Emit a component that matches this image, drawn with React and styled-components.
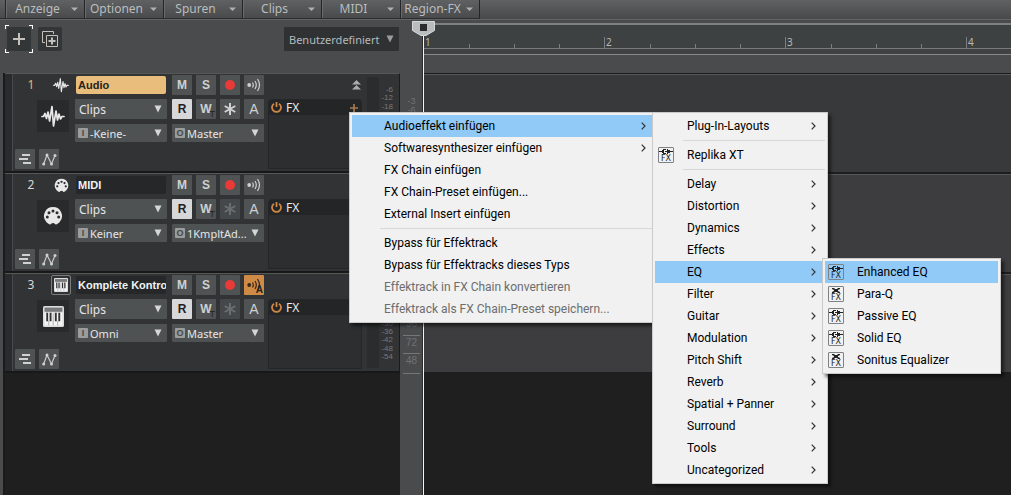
import React from "react";
import styled, { createGlobalStyle, css } from "styled-components";

const ui = `"Noto Sans", "Open Sans", sans-serif`;
const arial = `"Liberation Sans", Arial, sans-serif`;

const GlobalStyle = createGlobalStyle`
  *, *::before, *::after { box-sizing: border-box; }
  body { margin: 0; background: #1f1f1f; font-family: ${ui}; font-size: 12px; }
  button, input, select { margin: 0; padding: 0; border: 0; font: inherit; color: inherit; background: none; outline: none; }
  svg { display: block; flex: none; }
`;

const App_ = styled.div`
  position: relative;
  display: flex;
  flex-direction: column;
  min-height: 100vh;
  overflow: hidden;
`;

/* ---------- menu bar ---------- */
const MenuBar = styled.nav`
  display: flex;
  height: 20px;
  background: linear-gradient(#606163, #48494b);
  border-bottom: 1px solid #636462;
`;
const BarStub = styled.div`
  width: 6px;
  border-right: 1px solid #242526;
  border-bottom: 1px solid #2c2d2e;
`;
const BarButton = styled.button`
  display: flex;
  align-items: center;
  width: 79px;
  padding: 0 6px 0 1px;
  border-right: 1px solid #242526;
  border-bottom: 1px solid #2c2d2e;
  box-shadow: inset 1px 0 #6a6b6c;
  color: #b9bdbe;
  font-size: 12px;
  line-height: 16px;
`;
const BarLabel = styled.span`
  flex: 1;
  margin-right: 3px;
  text-align: center;
  white-space: nowrap;
`;

/* ---------- workspace ---------- */
const Workspace = styled.main`
  flex: 1;
  display: flex;
  background: #4a4b4d;
`;
const TrackPane = styled.section`
  display: flex;
  flex-direction: column;
  width: 400px;
  flex: none;
`;
const Tools = styled.div`
  display: flex;
  align-items: center;
  gap: 5px;
  height: 53px;
  padding: 0 1px 15px 5px;
`;
const AddFrame = styled.div`
  padding: 2px;
  background:
    linear-gradient(#fff, #fff) 0 0 / 4px 1px, linear-gradient(#fff, #fff) 0 0 / 1px 4px,
    linear-gradient(#fff, #fff) 100% 0 / 4px 1px, linear-gradient(#fff, #fff) 100% 0 / 1px 4px,
    linear-gradient(#fff, #fff) 0 100% / 4px 1px, linear-gradient(#fff, #fff) 0 100% / 1px 4px,
    linear-gradient(#fff, #fff) 100% 100% / 4px 1px, linear-gradient(#fff, #fff) 100% 100% / 1px 4px;
  background-repeat: no-repeat;
`;
const ToolButton = styled.button`
  display: grid;
  place-items: center;
  width: 24px;
  height: 24px;
  border-radius: 2px;
  background: #323637;
  color: #c5c0b9;
`;

const Picker = styled.div`
  position: relative;
  display: flex;
  align-items: center;
  height: ${(p) => p.$h}px;
  border-radius: 1px;
  background: ${(p) => p.$bg || "#4e5253"};
  color: ${(p) => p.$fg || "#e6e6e6"};
  margin-left: ${(p) => (p.$push ? "auto" : 0)};
  width: ${(p) => (p.$push ? "115px" : "auto")};
  select {
    appearance: none;
    width: 100%;
    height: 100%;
    padding-top: 1px;
    padding-left: ${(p) => (p.$badge ? 15 : p.$push ? 5 : 4)}px;
    font-size: ${(p) => (p.$badge || p.$push ? 11 : 12)}px;
    line-height: 16px;
  }
  option { color: #000; }
`;
const PickerArrow = styled.svg`
  position: absolute;
  right: 5px;
  pointer-events: none;
`;
const PortBadge = styled.span`
  position: absolute;
  left: 3px;
  display: grid;
  place-items: center;
  width: 10px;
  height: 10px;
  border-radius: 1px;
  background: #9b9c9c;
  color: #45484a;
  font: bold 9px/10px ${arial};
  pointer-events: none;
`;

/* ---------- tracks ---------- */
const TrackList = styled.div`
  flex: 1;
  margin-left: 3px;
  border-left: 2px solid #1b1b1c;
  background: #1f1f1f;
`;
const Track = styled.article`
  display: flex;
  padding-right: 2px;
  background: #323335;
  border-top: 1px solid #565855;
  border-bottom: 2px solid #181818;
  border-right: 1px solid #1b1b1b;
`;
const Grip = styled.div`
  width: 8px;
  background: #2a2b2e;
  border-right: 1px solid #48494b;
`;
const Col = styled.div`
  display: flex;
  flex-direction: column;
  width: ${(p) => p.$w}px;
  margin-right: ${(p) => p.$mr || 0}px;
  padding: 1px 0 2px;
`;
const Head = styled.div`
  display: flex;
  align-items: center;
  justify-content: flex-end;
  height: 20px;
  padding-right: 4px;
`;
const Num = styled.span`
  width: 16px;
  margin-right: 12px;
  text-align: center;
  color: ${(p) => (p.$active ? "#eab26a" : "#d8d8d8")};
  font-size: 12px;
  line-height: 16px;
`;
const SmallIcon = styled.span`
  display: grid;
  place-items: center;
  width: 20px;
  height: 20px;
  border-radius: 2px;
  border: 1px solid ${(p) => (p.$framed ? "#7b7c7d" : "transparent")};
`;
const BigIcon = styled.div`
  display: grid;
  place-items: center;
  width: 32px;
  height: 32px;
  margin: 5px 6px 17px auto;
  background: #292a2b;
`;
const Row = styled.div`
  display: flex;
  gap: 4px;
  padding-left: ${(p) => p.$pl || 0}px;
  margin-bottom: ${(p) => p.$mb || 0}px;
`;
const Name = styled.input`
  width: 90px;
  height: 18px;
  margin: 1px 1px 5px;
  padding: 0 0 0 2px;
  border-radius: 2px;
  background: ${(p) => (p.$active ? "#e9bd7c" : "#262728")};
  color: ${(p) => (p.$active ? "#26221c" : "#eef4f6")};
  font: bold 11px/18px ${arial};
`;
const Btn = styled.button`
  position: relative;
  display: grid;
  place-items: center;
  width: 20px;
  height: 20px;
  border-radius: 1px;
  background: #505354;
  color: #cfd0d0;
  font: bold 12px/20px ${arial};
  ${(p) => p.$letter === "tall" && css`font: 14px/20px ${arial};`}
  ${(p) => p.$on === "light" && css`background: #d6d7d9; color: #1f2022;`}
  ${(p) => p.$on === "orange" && css`background: #cf8b45; color: #33261a;`}
  ${(p) => p.$dim && css`background: #45484a; color: #6b6e70;`}
`;
const Sub = styled.small`
  position: absolute;
  right: 1px;
  bottom: 0;
  color: #222;
  font: ${(p) => (p.$bold ? "bold 10px/10px" : "9px/10px")} ${arial};
`;
const Stack = styled.div`
  display: flex;
  flex-direction: column;
  gap: ${(p) => p.$gap}px;
`;
const Expand = styled.div`
  display: flex;
  justify-content: flex-end;
  align-items: center;
  height: 20px;
  padding-right: 1px;
  margin-bottom: 4px;
`;
const FxBox = styled.div`
  flex: 1;
  border: 1px solid #252627;
  border-radius: 4px 4px 0 0;
  background: #2d2e30;
`;
const FxHead = styled.div`
  display: flex;
  align-items: center;
  gap: 4px;
  height: 15px;
  padding: 0 3px 0 2px;
  border-radius: 3px 3px 0 0;
  background: #242526;
  color: #e8eaec;
  font-size: 12px;
  line-height: 15px;
  svg:last-child { margin-left: auto; }
`;
const MeterBar = styled.div`
  width: 12px;
  margin: 3px 1px;
  border-radius: 2px;
  background: #2b2c2d;
`;
const MeterScale = styled.div`
  flex: 1;
  display: flex;
  flex-direction: column;
  justify-content: space-between;
  padding: 12px 4px 10px 0;
  text-align: right;
  color: #77797b;
  font: 8px/8px ${arial};
`;

/* ---------- vertical scale ---------- */
const ScalePane = styled.aside`
  flex: none;
  width: 23px;
  padding: 77px 2px 0 3px;
  border-right: 1px solid #2b2b2c;
`;
const ScalePart = styled.div`
  height: 100px;
  display: flex;
  flex-direction: column;
  text-align: center;
  color: #707274;
  font: 9px/9px ${arial};
`;
const Key = styled.div`
  height: ${(p) => p.$h}px;
  border-bottom: 1px solid #747678;
  font-size: 10px;
  line-height: 14px;
`;

/* ---------- timeline ---------- */
const Timeline = styled.section`
  position: relative;
  flex: 1;
  min-width: 0;
  display: flex;
  flex-direction: column;
  background: #1f1f1f;
`;
const RulerArea = styled.div`
  height: 54px;
  padding-top: 3px;
  background: #4a4b4d;
  border-bottom: 1px solid #1c1c1d;
`;
const Ruler = styled.div`
  display: flex;
  align-items: flex-end;
  height: 26px;
  overflow: hidden;
  background: #3e4141;
  border-top: 2px solid #7e8081;
  border-bottom: 1px solid #77797a;
`;
const RulerFoot = styled.div`
  height: 6px;
  background: #3f4142;
  border-bottom: 1px solid #87898a;
`;
const Bar = styled.div`
  flex: none;
  display: grid;
  grid-template-columns: 46px 45px 45px 45px;
  align-items: end;
  width: 181px;
  color: #b4b9bb;
  font: 10px/11px ${ui};
`;
const Beat = styled.span`
  height: ${(p) => (p.$major ? 11 : 4)}px;
  padding-left: 1px;
  border-left: 1px solid #7b7d7e;
`;
const Lane = styled.div`
  height: 100px;
  background: ${(p) => p.$bg};
  border-top: 1px solid #565857;
  border-bottom: 2px solid #1e1e1f;
`;
const Playhead = styled.div`
  position: absolute;
  top: 1px;
  bottom: 0;
  left: -11px;
  width: 23px;
  display: flex;
  flex-direction: column;
  align-items: center;
`;
const PlayLine = styled.div`
  flex: 1;
  width: 1px;
  background: #f4f4f4;
`;

/* ---------- context menus ---------- */
const Menu = styled.div`
  position: absolute;
  left: ${(p) => p.$x}px;
  top: ${(p) => p.$y}px;
  width: ${(p) => p.$w}px;
  padding: 2px;
  border: 1px solid #c9cac9;
  background: #f1f1f1;
  color: #000;
  box-shadow: 3px 3px 3px rgba(0, 0, 0, 0.5);
`;
const Item = styled.button`
  display: flex;
  align-items: center;
  width: 100%;
  height: 22px;
  padding-right: 9px;
  background: ${(p) => (p.$on ? "#91c9f7" : "transparent")};
  color: ${(p) => (p.disabled ? "#6d6d6d" : "#000")};
  text-align: left;
  white-space: nowrap;
  font: 12px/22px Roboto, "Open Sans", sans-serif;
  > svg { margin-left: auto; }
`;
const ItemIcon = styled.span`
  width: 32px;
  padding-left: 3px;
`;
const Rule = styled.hr`
  height: 1px;
  margin: 3px 0 3px 28px;
  border: 0;
  background: #d7d7d7;
`;

/* ---------- drawings ---------- */
const BarArrow = () => (
  <svg width="7" height="4" viewBox="0 0 7 4"><path d="M0 0.5h7L3.5 4z" fill="#aeb2b3" /></svg>
);
const Arrow = ({ color }) => (
  <PickerArrow width="8" height="8" viewBox="0 0 8 8"><path d="M0.5 0.5h7L4 7.5z" fill={color} /></PickerArrow>
);
const Wave = ({ s }) => (
  <svg width={s} height={s} viewBox="0 0 24 24" fill="none" stroke="#e8e8e8" strokeWidth="1.7" strokeLinejoin="round" strokeLinecap="round">
    <path d="M1 12.5h1.5L4 9.5l1.5 5L7 8l1.6 9L11 2.5l1.5 19.500L15 7l1.500 9L18 10l1.500 5 1.500-2.500 2 0" />
  </svg>
);
const Din = ({ s }) => (
  <svg width={s} height={s} viewBox="0 0 20 20">
    <path d="M10 1a9 9 0 0 0-6.500 15.200c1 1.100 2 1.800 3.300 2.300 1.200.4 1.400-1.500 3.200-1.500s2 1.900 3.200 1.500c1.300-.5 2.300-1.200 3.300-2.300A9 9 0 0 0 10 1z" fill="#e8e8e8" />
    <g fill="#2b2c2e">
      <circle cx="4.300" cy="11" r="1.500" /><circle cx="6" cy="6.800" r="1.500" /><circle cx="10" cy="5" r="1.500" />
      <circle cx="14" cy="6.800" r="1.500" /><circle cx="15.700" cy="11" r="1.500" />
    </g>
  </svg>
);
const Piano = ({ s }) => (
  <svg width={s} height={s} viewBox="0 0 20 20">
    <rect x="0" y="0" width="20" height="20" rx="1.500" fill="#dcdcdc" />
    <rect x="1.500" y="1.500" width="17" height="4" fill="#77797a" />
    <rect x="1.500" y="6.500" width="17" height="12" fill="#f4f4f4" />
    <path d="M4 6.500v8M7.200 6.500v8M12.200 6.500v8M15.500 6.500v8" stroke="#333" strokeWidth="1.800" />
    <path d="M5.500 14v4.500M9.700 7v11.500M14 14v4.500" stroke="#999" strokeWidth="0.700" />
  </svg>
);
const icons = { wave: Wave, din: Din, piano: Piano };
const smallSizes = { wave: 16, din: 15, piano: 14 };
const bigSizes = { wave: 24, din: 20, piano: 21 };
const Lanes = () => (
  <svg width="12" height="10" viewBox="0 0 12 10"><path d="M3 1h8M0 5h9M4 9h8" stroke="#d0d2d2" strokeWidth="2" /></svg>
);
const Automation = () => (
  <svg width="15" height="13" viewBox="0 0 15 13">
    <path d="M1.700 11L5 2l4.500 9L13 2.500" fill="none" stroke="#cfd1d1" strokeWidth="1.100" />
    <g fill="#cfd1d1"><circle cx="1.700" cy="11" r="1.500" /><circle cx="5" cy="2" r="1.500" /><circle cx="9.500" cy="11" r="1.500" /><circle cx="13" cy="2.500" r="1.500" /></g>
  </svg>
);
const Echo = () => (
  <svg width="14" height="14" viewBox="0 0 14 14" fill="none" stroke="currentColor" strokeWidth="1.200">
    <circle cx="2.200" cy="7" r="1.900" fill="currentColor" stroke="none" />
    <path d="M5.500 4.500q1.600 2.500 0 5M8 3q2.600 4 0 8M10.500 1q4 6 0 12" />
  </svg>
);
const Star = () => (
  <svg width="12" height="12" viewBox="0 0 12 12"><path d="M6 0v12M0.700 3l10.600 6M0.700 9l10.600-6" stroke="currentColor" strokeWidth="2" /></svg>
);
const Power = () => (
  <svg width="11" height="11" viewBox="0 0 11 11" fill="none" stroke="#cf8743" strokeWidth="1.800">
    <path d="M3 1.700a4.500 4.500 0 1 0 5 0M5.500 0v5" />
  </svg>
);
const Plus = ({ s, w, color = "currentColor" }) => (
  <svg width={s} height={s} viewBox="0 0 12 12"><path d="M6 0v12M0 6h12" stroke={color} strokeWidth={w} /></svg>
);
const Duplicate = () => (
  <svg width="16" height="16" viewBox="0 0 16 16" fill="none" stroke="currentColor">
    <path d="M3 11.500H0.500V0.500h11V3M4.500 4.500h11v11h-11z" />
    <path d="M10 6.500v7M6.500 10h7" strokeWidth="2" />
  </svg>
);
const Chevron = () => (
  <svg width="5" height="8" viewBox="0 0 5 8"><path d="M0.700 0.700L4 4 0.700 7.300" fill="none" stroke="#333" strokeWidth="1.200" /></svg>
);
const PlugIcon = ({ kind }) => (
  <svg width="16" height="16" viewBox="0 0 16 16">
    <rect x="0.500" y="0.500" width="15" height="15" rx="0.500" fill="none" stroke="#7e8285" />
    {kind === "vst" ? (
      <g fill="#222">
        <path d="M1 4h3V3h1V2h3v1H6v3h2v1H5V6H4V5H1z" />
        <path d="M9 2h1v1h2v1h3v1h-3v1h-2v1H9V5H7V4h2z" />
      </g>
    ) : (
      <path d="M4 2h2l1 1h2l1-1h2v1l-2 1v1l2 1v1h-2L9 6H7L6 7H4V6l2-1V4L4 3z" fill="#222" />
    )}
    <text x="8" y="14" textAnchor="middle" fontFamily="DejaVu Sans, sans-serif" fontSize="8" fill="#222">FX</text>
  </svg>
);

/* ---------- data ---------- */
const barMenus = ["Anzeige", "Optionen", "Spuren", "Clips", "MIDI", "Region-FX"];
const tracks = [
  { name: "Audio", icon: "wave", input: "-Keine-", output: "Master", active: true },
  { name: "MIDI", icon: "din", input: "Keiner", output: "1KmpltAd..." },
  { name: "Komplete Kontrol", icon: "piano", input: "Omni", output: "Master", framed: true, echoOn: true },
];
const levels = [-6, -12, -18, -24, -30, -36, -42, -48, -54];
const rackMenu = [
  { t: "Audioeffekt einfügen", sub: true, on: true },
  { t: "Softwaresynthesizer einfügen", sub: true },
  { t: "FX Chain einfügen" },
  { t: "FX Chain-Preset einfügen..." },
  { t: "External Insert einfügen" },
  null,
  { t: "Bypass für Effektrack" },
  { t: "Bypass für Effektracks dieses Typs" },
  { t: "Effektrack in FX Chain konvertieren", off: true },
  { t: "Effektrack als FX Chain-Preset speichern...", off: true },
];
const effectMenu = [
  { t: "Plug-In-Layouts", sub: true },
  null,
  { t: "Replika XT", icon: "vst" },
  null,
  ...["Delay", "Distortion", "Dynamics", "Effects", "EQ", "Filter", "Guitar", "Modulation", "Pitch Shift",
    "Reverb", "Spatial + Panner", "Surround", "Tools", "Uncategorized"].map((t) => ({ t, sub: true, on: t === "EQ" })),
];
const eqMenu = [
  { t: "Enhanced EQ", icon: "vst", on: true },
  { t: "Para-Q", icon: "dx" },
  { t: "Passive EQ", icon: "vst" },
  { t: "Solid EQ", icon: "vst" },
  { t: "Sonitus Equalizer", icon: "dx" },
];

function Dropdown({ label, value, badge, h, push, bg, fg, arrow = "#d5d6d6" }) {
  return (
    <Picker $h={h} $badge={badge} $push={push} $bg={bg} $fg={fg}>
      {badge && <PortBadge>{badge}</PortBadge>}
      <select aria-label={label} defaultValue={value}><option>{value}</option></select>
      <Arrow color={arrow} />
    </Picker>
  );
}

function TrackStrip({ track, index }) {
  const Icon = icons[track.icon];
  return (
    <Track>
      <Grip />
      <Col $w={62}>
        <Head>
          <Num $active={track.active}>{index + 1}</Num>
          <SmallIcon $framed={track.framed}><Icon s={smallSizes[track.icon]} /></SmallIcon>
        </Head>
        <BigIcon><Icon s={bigSizes[track.icon]} /></BigIcon>
        <Row $pl={2}>
          <Btn aria-label="Take-Lanes"><Lanes /></Btn>
          <Btn aria-label="Automation"><Automation /></Btn>
        </Row>
      </Col>
      <Col $w={92} $mr={5}>
        <Name aria-label="Spurname" defaultValue={track.name} $active={track.active} />
        <Stack $gap={5}>
          <Dropdown label="Bearbeitungsfilter" value="Clips" h={20} />
          <Dropdown label="Eingang" value={track.input} badge="I" h={18} />
        </Stack>
      </Col>
      <Col $w={92} $mr={4}>
        <Row $mb={4}>
          <Btn>M</Btn>
          <Btn>S</Btn>
          <Btn aria-label="Aufnahme"><svg width="10" height="10"><circle cx="5" cy="5" r="5" fill="#e93a38" /></svg></Btn>
          <Btn aria-label="Echo" $on={track.echoOn && "orange"}><Echo />{track.echoOn && <Sub $bold>A</Sub>}</Btn>
        </Row>
        <Row $mb={5}>
          <Btn $on="light">R</Btn>
          <Btn>W<Sub>T</Sub></Btn>
          <Btn aria-label="Freeze" $dim={!track.active}><Star /></Btn>
          <Btn $letter="tall">A</Btn>
        </Row>
        <Dropdown label="Ausgang" value={track.output} badge="O" h={18} />
      </Col>
      <Col $w={94} $mr={4}>
        <Expand>
          {track.active && (
            <svg width="9" height="10" viewBox="0 0 9 10"><path d="M4.500 0L9 4.500H0zM4.500 5L9 9.500H0z" fill="#a9abac" /></svg>
          )}
        </Expand>
        <FxBox>
          <FxHead><Power /><span>FX</span><Plus s={8} w={2.500} color="#a67a52" /></FxHead>
        </FxBox>
      </Col>
      <MeterBar />
      <MeterScale>{levels.map((n) => <span key={n}>{n}</span>)}</MeterScale>
    </Track>
  );
}

function PopupMenu({ items, x, y, w, label }) {
  return (
    <Menu role="menu" aria-label={label} $x={x} $y={y} $w={w}>
      {items.map((it, i) => it === null ? <Rule key={i} /> : (
        <Item key={i} role="menuitem" $on={it.on} disabled={it.off}>
          <ItemIcon>{it.icon && <PlugIcon kind={it.icon} />}</ItemIcon>
          <span>{it.t}</span>
          {it.sub && <Chevron />}
        </Item>
      ))}
    </Menu>
  );
}

export default function App() {
  return (
    <App_>
      <GlobalStyle />
      <MenuBar>
        <BarStub />
        {barMenus.map((m) => <BarButton key={m}><BarLabel>{m}</BarLabel><BarArrow /></BarButton>)}
      </MenuBar>
      <Workspace>
        <TrackPane>
          <Tools>
            <AddFrame><ToolButton aria-label="Spur hinzufügen"><Plus s={12} w={2} /></ToolButton></AddFrame>
            <ToolButton aria-label="Spur duplizieren"><Duplicate /></ToolButton>
            <Dropdown label="Ansicht" value="Benutzerdefiniert" h={24} push bg="#2f3132" fg="#b5babd" arrow="#9a9c9d" />
          </Tools>
          <TrackList>
            {tracks.map((t, i) => <TrackStrip key={t.name} track={t} index={i} />)}
          </TrackList>
        </TrackPane>
        <ScalePane>
          <ScalePart><span>-3</span><span>-6</span></ScalePart>
          <ScalePart />
          <ScalePart>
            <Key $h={20} /><Key $h={19}>96</Key><Key $h={18}>72</Key><Key $h={20}>48</Key>
          </ScalePart>
        </ScalePane>
        <Timeline>
          <RulerArea>
            <Ruler>
              {[1, 2, 3, 4].map((n) => <Bar key={n}><Beat $major>{n}</Beat><Beat /><Beat /><Beat /></Bar>)}
            </Ruler>
            <RulerFoot />
          </RulerArea>
          <Lane $bg="#38393b" />
          <Lane $bg="#3d3d3f" />
          <Lane $bg="#3d3d3f" />
          <Playhead>
            <svg width="23" height="15" viewBox="0 0 23 15">
              <path d="M0.500 0.500h22V9.500L14 14.500H9L0.500 9.500z" fill="#b9bdbe" stroke="#d7dadb" />
              <rect x="8" y="3" width="7" height="7" fill="#2b2c2d" />
            </svg>
            <PlayLine />
          </Playhead>
        </Timeline>
      </Workspace>
      <PopupMenu label="Effektrack" items={rackMenu} x={349} y={112} w={309} />
      <PopupMenu label="Audioeffekte" items={effectMenu} x={652} y={112} w={176} />
      <PopupMenu label="EQ" items={eqMenu} x={822} y={258} w={179} />
    </App_>
  );
}
